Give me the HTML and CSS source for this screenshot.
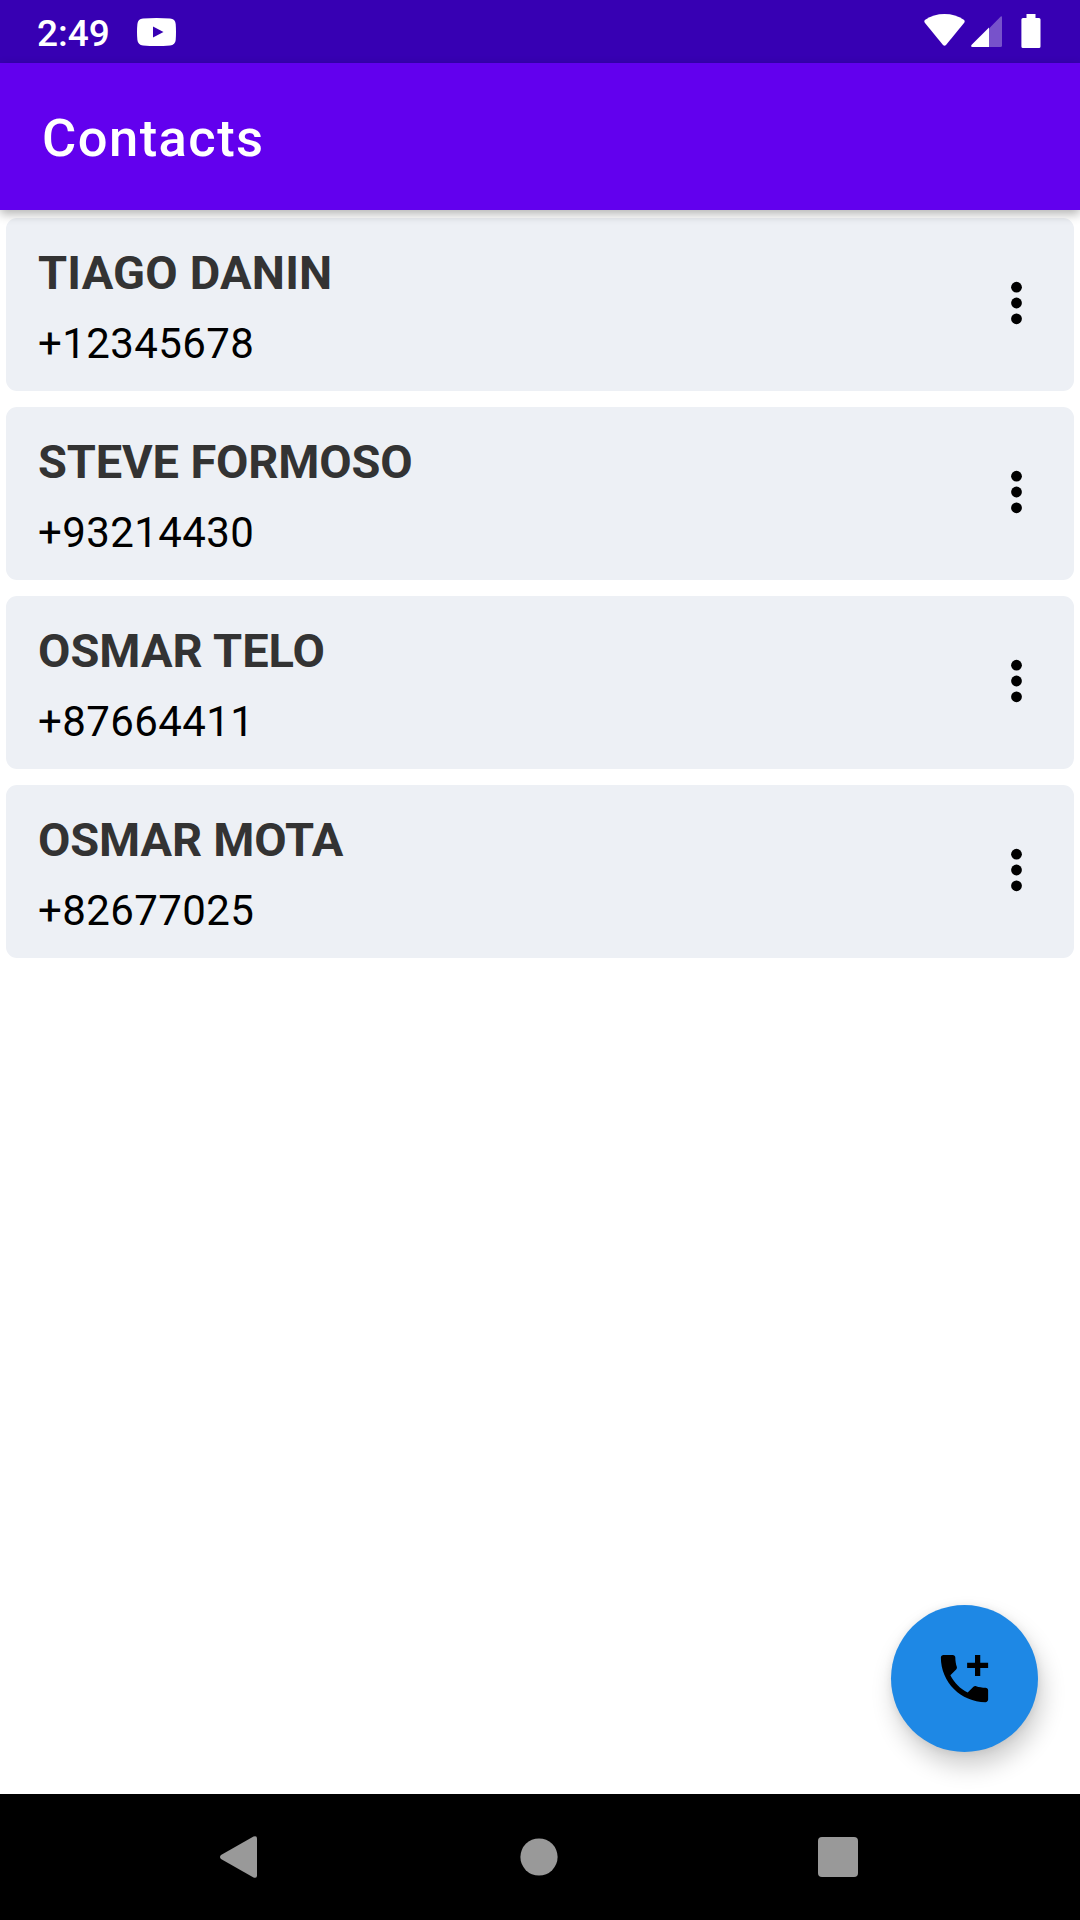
FILE: index.html
```html
<!DOCTYPE html>
<html lang="en">
<head>
<meta charset="utf-8">
<title>Contacts</title>
<link rel="stylesheet" href="styles.css">
</head>
<body>
<div class="screen">
  <div class="status">
    <span class="time">2:49</span>
    <svg class="yt" width="39" height="28" viewBox="0 0 39 28"><path d="M6 .6Q19.500-.6 33 .6 38.300 1 38.700 6q.6 8 0 16-.4 5-5.700 5.400-13.500 1.200-27 0Q.9 27 .4 22-.4 14 .4 6 .9 1 6 .6z" fill="#fff"/><path d="M16 8.500v11l10.500-5.500z" fill="#3700b3"/></svg>
    <div class="signals">
      <svg width="41" height="32" viewBox="0 0 41 32"><path d="M22 31q-1.500 1.500-3 0L.8 8.800Q-.4 7 1.200 5.800 9.500 0 20.500 0t19.300 5.800q1.600 1.200.4 3z" fill="#fff"/></svg>
      <svg class="cell" width="31" height="31" viewBox="0 0 31 31"><path d="M18 12.500L29.500.8Q31-.4 31 1.500V29.500q0 1.500-1.500 1.500H18z" fill="#fff" opacity=".32"/><path d="M18 11.500V31H1.500Q-.8 31 .7 28.800z" fill="#fff"/></svg>
      <svg class="battery" width="20" height="34" viewBox="0 0 20 34"><path d="M5.500 0h9v4H18q1.500 0 1.500 1.500v27Q19.500 34 18 34H2Q.4 34 .4 32.500v-27Q.4 4 2 4h3.500z" fill="#fff"/></svg>
    </div>
  </div>
  <header class="appbar"><h1>Contacts</h1></header>
  <main class="list">
    <article class="card"><div><h2 class="loose">TIAGO DANIN</h2><p>+12345678</p></div><svg class="more" width="12" height="44" viewBox="0 0 12 44"><circle cx="6.500" cy="6.200" r="5.400"/><circle cx="6.500" cy="22" r="5.400"/><circle cx="6.500" cy="37.800" r="5.400"/></svg></article>
    <article class="card"><div><h2 class="snug">STEVE FORMOSO</h2><p>+93214430</p></div><svg class="more" width="12" height="44" viewBox="0 0 12 44"><circle cx="6.500" cy="6.200" r="5.400"/><circle cx="6.500" cy="22" r="5.400"/><circle cx="6.500" cy="37.800" r="5.400"/></svg></article>
    <article class="card"><div><h2>OSMAR TELO</h2><p>+87664411</p></div><svg class="more" width="12" height="44" viewBox="0 0 12 44"><circle cx="6.500" cy="6.200" r="5.400"/><circle cx="6.500" cy="22" r="5.400"/><circle cx="6.500" cy="37.800" r="5.400"/></svg></article>
    <article class="card"><div><h2 class="snug">OSMAR MOTA</h2><p>+82677025</p></div><svg class="more" width="12" height="44" viewBox="0 0 12 44"><circle cx="6.500" cy="6.200" r="5.400"/><circle cx="6.500" cy="22" r="5.400"/><circle cx="6.500" cy="37.800" r="5.400"/></svg></article>
  </main>
  <button class="fab" aria-label="Add contact"><svg width="63" height="63" viewBox="0 0 24 24"><path d="M20 15.500c-1.250 0-2.450-.2-3.570-.57-.1-.03-.21-.05-.31-.05-.26 0-.51.1-.71.29l-2.200 2.200c-2.830-1.440-5.150-3.750-6.590-6.590l2.200-2.210c.28-.26.36-.65.25-1C8.700 6.450 8.500 5.250 8.500 4c0-.55-.45-1-1-1H4c-.55 0-1 .45-1 1 0 9.390 7.610 17 17 17 .55 0 1-.45 1-1v-3.500c0-.55-.45-1-1-1zM21 6h-3V3h-2v3h-3v2h3v3h2V8h3z"/></svg></button>
  <nav class="nav">
    <svg width="37" height="42" viewBox="0 0 37 42"><path d="M37 2.500v37q0 3.300-3.500 2L1 23q-2-2 0-4L33.500.5q3.500-1.300 3.500 2z" fill="#999"/></svg>
    <svg class="home" width="38" height="38"><circle cx="19" cy="19" r="18.600" fill="#999"/></svg>
    <svg width="40" height="40"><rect width="40" height="40" rx="4" fill="#999"/></svg>
  </nav>
</div>
</body>
</html>
```
FILE: styles.css
```css
* { box-sizing: border-box; }
body { margin: 0; font-family: Roboto, sans-serif; background: #fff; }
h1, h2, p { margin: 0; }
.screen { position: relative; width: 1080px; height: 1920px; display: flex; flex-direction: column; overflow: hidden; }
.status { height: 63px; background: #3700b3; display: flex; align-items: center; padding: 0 39px 0 37px; color: #fff; }
.time { font-size: 37px; font-weight: 500; line-height: 44px; margin-top: 4px; }
.yt { margin-left: 27px; }
.signals { display: flex; align-items: flex-start; margin-left: auto; height: 35px; }
.cell { margin: 2px 0 0 6px; }
.battery { margin-left: 19px; }
.appbar { height: 147px; background: #6200ee; display: flex; align-items: center; padding: 3px 42px 0; color: #fff; box-shadow: 0 4px 10px rgba(0,0,0,.3); z-index: 1; }
.appbar h1 { font-size: 52.500px; font-weight: 500; letter-spacing: 1.450px; }
.list { flex: 1; display: flex; flex-direction: column; gap: 16px; padding: 8px 6px; }
.card { height: 173px; border-radius: 11px; background: #edf0f5; display: flex; justify-content: space-between; padding: 25px 52px 0 32px; }
.card h2 { font-size: 47px; line-height: 60px; font-weight: 700; color: #333; }
.card h2.loose { letter-spacing: .2px; }
.card h2.snug { letter-spacing: -.15px; }
.card p { font-size: 42px; line-height: 60px; margin-top: 11px; letter-spacing: .4px; color: #000; }
.more { margin-top: 38px; }
.fab { position: absolute; left: 891px; top: 1605px; width: 147px; height: 147px; border: 0; padding: 0; border-radius: 50%; background: #1e88e5; display: flex; align-items: center; justify-content: center; box-shadow: 4px 14px 24px rgba(0,0,0,.2), 0 1px 8px rgba(0,0,0,.08); }
.nav { height: 126px; background: #000; display: flex; justify-content: space-between; align-items: center; padding: 0 222px 0 220px; }
.home { margin-left: 3px; margin-top: -1px; }
```
